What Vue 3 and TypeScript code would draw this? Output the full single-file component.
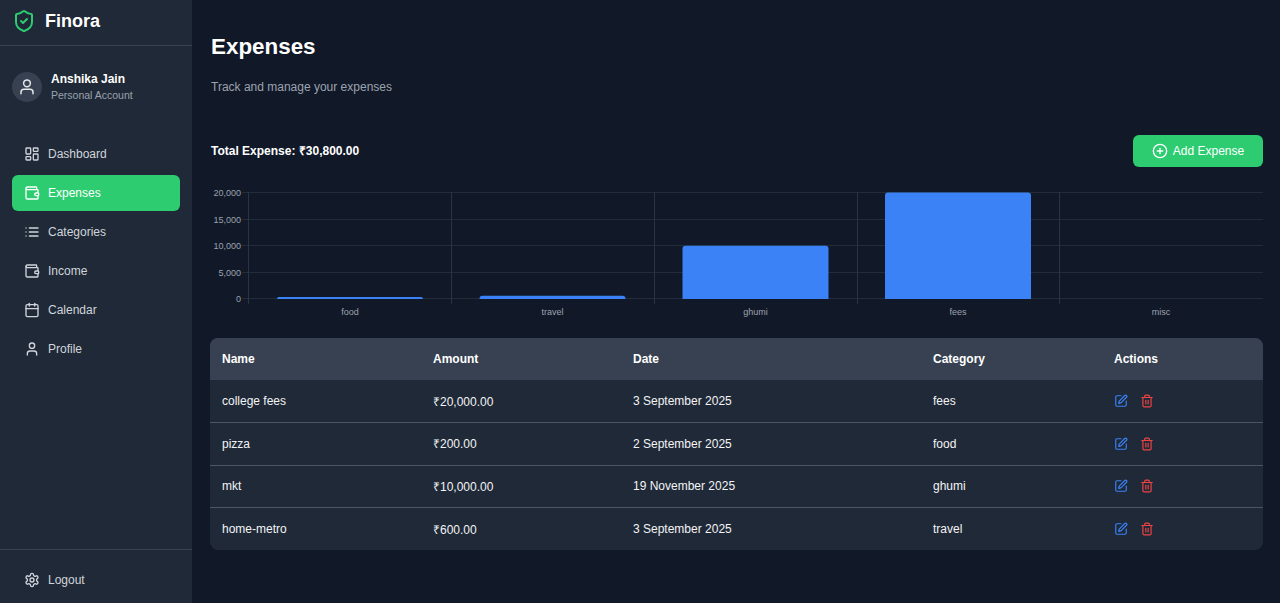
<template>
  <div class="layout">
    <aside class="sidebar">
      <div class="brand">
        <svg class="brand-icon" viewBox="0 0 24 24" fill="none" stroke="#2ecc71" stroke-width="2" stroke-linecap="round" stroke-linejoin="round">
          <path d="M20 13c0 5-3.5 7.5-7.66 8.95a1 1 0 0 1-.67-.01C7.5 20.5 4 18 4 13V6a1 1 0 0 1 1-1c2 0 4.500-1.200 6.240-2.720a1.170 1.170 0 0 1 1.520 0C14.510 3.810 17 5 19 5a1 1 0 0 1 1 1z" />
          <path d="m9 12 2 2 4-4" />
        </svg>
        <span class="brand-name">Finora</span>
      </div>

      <div class="account">
        <div class="avatar">
          <svg viewBox="0 0 24 24" fill="none" stroke="currentColor" stroke-width="2" stroke-linecap="round" stroke-linejoin="round">
            <path d="M20 21v-2a4 4 0 0 0-4-4H8a4 4 0 0 0-4 4v2" />
            <circle cx="12" cy="7" r="4.500" />
          </svg>
        </div>
        <div>
          <div class="account-name">Anshika Jain</div>
          <div class="account-type">Personal Account</div>
        </div>
      </div>

      <nav class="nav">
        <a v-for="item in navItems" :key="item.label" class="nav-item" :class="{ active: item.label === 'Expenses' }">
          <svg class="nav-icon" viewBox="0 0 24 24" fill="none" stroke="currentColor" stroke-width="2" stroke-linecap="round" stroke-linejoin="round">
            <path v-for="d in item.paths" :key="d" :d="d" />
          </svg>
          {{ item.label }}
        </a>
      </nav>

      <div class="logout">
        <a class="nav-item">
          <svg class="nav-icon" viewBox="0 0 24 24" fill="none" stroke="currentColor" stroke-width="2" stroke-linecap="round" stroke-linejoin="round">
            <path d="M12.220 2h-.44a2 2 0 0 0-2 2v.18a2 2 0 0 1-1 1.730l-.43.250a2 2 0 0 1-2 0l-.15-.08a2 2 0 0 0-2.730.730l-.22.380a2 2 0 0 0 .730 2.730l.15.100a2 2 0 0 1 1 1.720v.510a2 2 0 0 1-1 1.740l-.15.090a2 2 0 0 0-.730 2.730l.22.380a2 2 0 0 0 2.730.730l.15-.08a2 2 0 0 1 2 0l.43.250a2 2 0 0 1 1 1.730V20a2 2 0 0 0 2 2h.44a2 2 0 0 0 2-2v-.18a2 2 0 0 1 1-1.730l.43-.250a2 2 0 0 1 2 0l.15.080a2 2 0 0 0 2.730-.730l.22-.390a2 2 0 0 0-.730-2.730l-.15-.080a2 2 0 0 1-1-1.740v-.500a2 2 0 0 1 1-1.740l.15-.090a2 2 0 0 0 .730-2.730l-.22-.380a2 2 0 0 0-2.730-.730l-.15.080a2 2 0 0 1-2 0l-.43-.250a2 2 0 0 1-1-1.730V4a2 2 0 0 0-2-2z" />
            <circle cx="12" cy="12" r="3" />
          </svg>
          Logout
        </a>
      </div>
    </aside>

    <main class="main">
      <h1 class="title">Expenses</h1>
      <p class="subtitle">Track and manage your expenses</p>

      <div class="toolbar">
        <span class="total">Total Expense: ₹30,800.00</span>
        <button class="add-btn">
          <svg viewBox="0 0 24 24" fill="none" stroke="currentColor" stroke-width="2" stroke-linecap="round" stroke-linejoin="round">
            <circle cx="12" cy="12" r="10" />
            <path d="M8 12h8" />
            <path d="M12 8v8" />
          </svg>
          Add Expense
        </button>
      </div>

      <svg class="chart" viewBox="0 0 1053 132" width="1053" height="132">
        <g stroke-width="1">
          <line v-for="t in ticks" :key="t.label" stroke="#222c3b" x1="32" x2="1053" :y1="t.y" :y2="t.y" />
          <line v-for="x in gridX" :key="x" stroke="#2a3343" :x1="x" :x2="x" y1="6" y2="118" />
        </g>
        <text v-for="t in ticks" :key="t.label" class="axis" x="31" :y="t.y + 3" text-anchor="end">{{ t.label }}</text>
        <path v-for="b in bars" :key="b.label" :d="barPath(b)" fill="#3b82f6" />
        <text v-for="b in bars" :key="b.label" class="axis" :x="b.x + 73" y="129" text-anchor="middle">{{ b.label }}</text>
      </svg>

      <div class="table-card">
        <table class="table">
          <thead>
            <tr>
              <th class="col-name">Name</th>
              <th class="col-amount">Amount</th>
              <th class="col-date">Date</th>
              <th class="col-cat">Category</th>
              <th>Actions</th>
            </tr>
          </thead>
          <tbody>
            <tr v-for="row in rows" :key="row.name">
              <td>{{ row.name }}</td>
              <td>{{ row.amount }}</td>
              <td>{{ row.date }}</td>
              <td>{{ row.category }}</td>
              <td>
                <div class="actions">
                  <svg class="edit" viewBox="0 0 24 24" fill="none" stroke="currentColor" stroke-width="2" stroke-linecap="round" stroke-linejoin="round">
                    <path d="M12 3H5a2 2 0 0 0-2 2v14a2 2 0 0 0 2 2h14a2 2 0 0 0 2-2v-7" />
                    <path d="M18.380 2.620a1 1 0 0 1 3 3l-9.010 9.020a2 2 0 0 1-.850.500l-2.870.840a.5.5 0 0 1-.620-.620l.840-2.870a2 2 0 0 1 .500-.850z" />
                  </svg>
                  <svg class="trash" viewBox="0 0 24 24" fill="none" stroke="currentColor" stroke-width="2" stroke-linecap="round" stroke-linejoin="round">
                    <path d="M3 6h18" />
                    <path d="M19 6v14a2 2 0 0 1-2 2H7a2 2 0 0 1-2-2V6" />
                    <path d="M8 6V4a2 2 0 0 1 2-2h4a2 2 0 0 1 2 2v2" />
                    <path d="M10 11v6" />
                    <path d="M14 11v6" />
                  </svg>
                </div>
              </td>
            </tr>
          </tbody>
        </table>
      </div>
    </main>
  </div>
</template>

<script setup lang="ts">
interface Bar {
  label: string
  x: number
  value: number
}

const wallet = [
  'M19 7V4a1 1 0 0 0-1-1H5a2 2 0 0 0 0 4h15a1 1 0 0 1 1 1v4h-3a2 2 0 0 0 0 4h3a1 1 0 0 0 1-1v-2a1 1 0 0 0-1-1',
  'M3 5v14a2 2 0 0 0 2 2h15a1 1 0 0 0 1-1v-4',
]

const navItems = [
  {
    label: 'Dashboard',
    paths: [
      'M4 3h5a1 1 0 0 1 1 1v7a1 1 0 0 1-1 1H4a1 1 0 0 1-1-1V4a1 1 0 0 1 1-1z',
      'M15 3h5a1 1 0 0 1 1 1v3a1 1 0 0 1-1 1h-5a1 1 0 0 1-1-1V4a1 1 0 0 1 1-1z',
      'M15 12h5a1 1 0 0 1 1 1v7a1 1 0 0 1-1 1h-5a1 1 0 0 1-1-1v-7a1 1 0 0 1 1-1z',
      'M4 16h5a1 1 0 0 1 1 1v3a1 1 0 0 1-1 1H4a1 1 0 0 1-1-1v-3a1 1 0 0 1 1-1z',
    ],
  },
  { label: 'Expenses', paths: wallet },
  {
    label: 'Categories',
    paths: ['M3 6h.01', 'M3 12h.01', 'M3 18h.01', 'M8 6h13', 'M8 12h13', 'M8 18h13'],
  },
  { label: 'Income', paths: wallet },
  {
    label: 'Calendar',
    paths: [
      'M8 2v4',
      'M16 2v4',
      'M5 4h14a2 2 0 0 1 2 2v14a2 2 0 0 1-2 2H5a2 2 0 0 1-2-2V6a2 2 0 0 1 2-2z',
      'M3 10h18',
    ],
  },
  {
    label: 'Profile',
    paths: [
      'M19 21v-2a4 4 0 0 0-4-4H9a4 4 0 0 0-4 4v2',
      'M12 3a4 4 0 1 0 0 8 4 4 0 0 0 0-8z',
    ],
  },
]

const ticks = [
  { label: '20,000', y: 6.5 },
  { label: '15,000', y: 33.5 },
  { label: '10,000', y: 59.5 },
  { label: '5,000', y: 86.5 },
  { label: '0', y: 112.500 },
]

const gridX = [38.500, 241.500, 444.500, 647.500, 849.500]

const bars: Bar[] = [
  { label: 'food', x: 67, value: 200 },
  { label: 'travel', x: 269.5, value: 600 },
  { label: 'ghumi', x: 472.5, value: 10000 },
  { label: 'fees', x: 675, value: 20000 },
  { label: 'misc', x: 878, value: 0 },
]

// 146px wide bars with a small top radius, baseline at the zero tick
function barPath(b: Bar): string {
  const base = 113
  if (b.value <= 0) return ''
  const h = Math.max((b.value / 20000) * 106.500, 2)
  const r = Math.min(3, h)
  const top = base - h
  return `M${b.x} ${base}V${top + r}Q${b.x} ${top} ${b.x + r} ${top}H${b.x + 146 - r}Q${b.x + 146} ${top} ${b.x + 146} ${top + r}V${base}Z`
}

const rows = [
  { name: 'college fees', amount: '₹20,000.00', date: '3 September 2025', category: 'fees' },
  { name: 'pizza', amount: '₹200.00', date: '2 September 2025', category: 'food' },
  { name: 'mkt', amount: '₹10,000.00', date: '19 November 2025', category: 'ghumi' },
  { name: 'home-metro', amount: '₹600.00', date: '3 September 2025', category: 'travel' },
]
</script>

<style>
html,
body {
  margin: 0;
  background: #111827;
}
</style>

<style scoped>
.layout {
  display: flex;
  height: 603px;
  overflow: hidden;
  font-family: "Liberation Sans", Arial, sans-serif;
  color: #fff;
  background: #111827;
}

.sidebar {
  width: 192px;
  flex-shrink: 0;
  display: flex;
  flex-direction: column;
  background: #1f2937;
}

.brand {
  display: flex;
  align-items: center;
  gap: 9px;
  height: 46px;
  padding-left: 12px;
  box-sizing: border-box;
  border-bottom: 1px solid #374151;
}

.brand-icon {
  width: 24px;
  height: 24px;
  margin-top: -3px;
}

.brand-name {
  font-size: 18px;
  font-weight: 700;
  margin-top: -3px;
}

.account {
  display: flex;
  align-items: center;
  gap: 9px;
  padding: 25px 12px 0;
}

.avatar {
  width: 30px;
  height: 30px;
  border-radius: 50%;
  background: #374151;
  color: #e5e7eb;
  display: flex;
  align-items: center;
  justify-content: center;
}

.avatar svg {
  width: 18px;
  height: 18px;
}

.account-name {
  font-size: 12px;
  font-weight: 700;
  line-height: 16px;
}

.account-type {
  font-size: 10.500px;
  line-height: 16px;
  color: #9ca3af;
}

.nav {
  flex: 1;
  display: flex;
  flex-direction: column;
  gap: 3px;
  padding: 33px 12px 0;
}

.nav-item {
  display: flex;
  align-items: center;
  gap: 8px;
  height: 36px;
  padding-left: 12px;
  border-radius: 6px;
  font-size: 12px;
  color: #d1d5db;
}

.nav-item.active {
  background: #2ecc71;
  color: #fff;
}

.nav-icon {
  width: 16px;
  height: 16px;
  flex-shrink: 0;
}

.logout {
  border-top: 1px solid #374151;
  padding: 12px 12px 5px;
}

.main {
  flex: 1;
  min-width: 0;
  padding: 32px 17px 0 18px;
}

.title {
  margin: 0 0 0 1px;
  font-size: 22.400px;
  line-height: 30px;
  font-weight: 700;
}

.subtitle {
  margin: 17px 0 0 1px;
  font-size: 12px;
  line-height: 16px;
  color: #9ca3af;
}

.toolbar {
  display: flex;
  align-items: center;
  justify-content: space-between;
  margin-top: 40px;
}

.total {
  font-size: 12px;
  font-weight: 700;
  margin-left: 1px;
  margin-top: -2px;
}

.add-btn {
  display: flex;
  align-items: center;
  gap: 5px;
  width: 130px;
  height: 32px;
  justify-content: center;
  border: 0;
  border-radius: 6px;
  background: #2ecc71;
  color: #fff;
  font: inherit;
  font-size: 12px;
}

.add-btn svg {
  width: 16px;
  height: 16px;
}

.chart {
  display: block;
  margin-top: 19px;
}

.axis {
  font-size: 9px;
  fill: #9ca3af;
}

.table-card {
  margin-top: 20px;
  border-radius: 8px;
  overflow: hidden;
  background: #1f2937;
}

.table {
  width: 100%;
  border-collapse: collapse;
  table-layout: fixed;
  font-size: 12px;
}

.col-name {
  width: 211px;
}

.col-amount {
  width: 200px;
}

.col-date {
  width: 300px;
}

.col-cat {
  width: 181px;
}

th {
  box-sizing: border-box;
  height: 42px;
  padding: 0 12px;
  text-align: left;
  font-weight: 700;
  background: #374151;
}

td {
  box-sizing: border-box;
  height: 42.500px;
  padding: 0 12px;
  color: #f3f4f6;
  border-top: 1px solid #4b5563;
}

tbody tr:first-child td {
  border-top: 0;
}

.actions {
  display: flex;
  align-items: center;
  gap: 12px;
  margin-left: -0.5px;
}

.actions svg {
  width: 14px;
  height: 14px;
}

.edit {
  color: #3b82f6;
}

.trash {
  color: #ef4444;
}
</style>
